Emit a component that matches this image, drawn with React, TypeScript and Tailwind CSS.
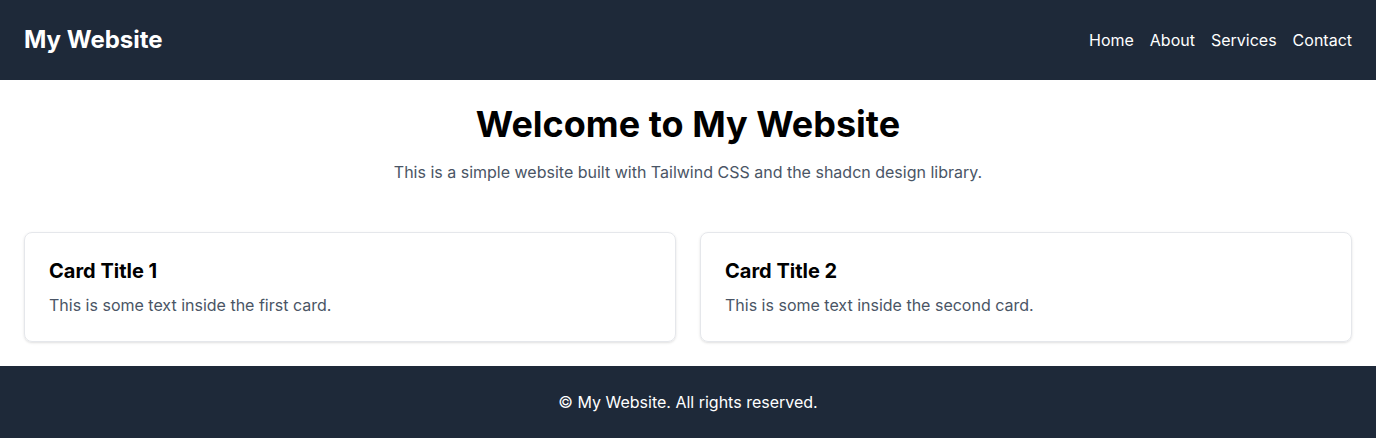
export default function App() {
  const cards = [
    { title: "Card Title 1", text: "This is some text inside the first card." },
    { title: "Card Title 2", text: "This is some text inside the second card." },
  ];

  return (
    <div className="min-h-screen bg-white font-['Inter',sans-serif]">
      <header className="bg-gray-800 text-white p-6 flex items-center justify-between">
        <h1 className="text-2xl font-bold">My Website</h1>
        <nav className="flex gap-4 text-base">
          <a href="#">Home</a>
          <a href="#">About</a>
          <a href="#">Services</a>
          <a href="#">Contact</a>
        </nav>
      </header>

      <main className="p-6">
        <section className="text-center mb-12">
          <h2 className="text-4xl font-bold mb-4 text-black">Welcome to My Website</h2>
          <p className="text-gray-600">
            This is a simple website built with Tailwind CSS and the shadcn design library.
          </p>
        </section>

        <div className="grid grid-cols-2 gap-6">
          {cards.map((c) => (
            <div key={c.title} className="border border-gray-200 rounded-lg p-6 shadow-sm">
              <h3 className="text-xl font-bold mb-2 text-black">{c.title}</h3>
              <p className="text-gray-600">{c.text}</p>
            </div>
          ))}
        </div>
      </main>

      <footer className="bg-gray-800 text-white p-6 text-center">
        <p>© My Website. All rights reserved.</p>
      </footer>
    </div>
  );
}
